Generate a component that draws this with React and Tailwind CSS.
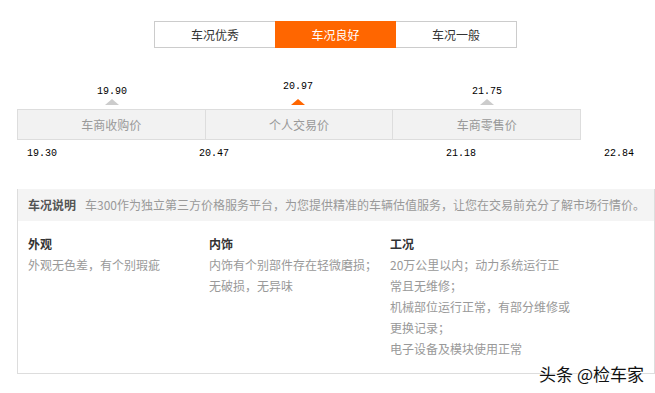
import React from 'react';

const tabs = [
  { label: '车况优秀', active: false },
  { label: '车况良好', active: true },
  { label: '车况一般', active: false },
];

const segments = ['车商收购价', '个人交易价', '车商零售价'];

// markers sit above the bar, left = centre in px from bar start
const markers = [
  { value: '19.90', left: 95, top: 38, active: false },
  { value: '20.97', left: 281, top: 33, active: true },
  { value: '21.75', left: 470, top: 38, active: false },
];

const ticks = [
  { value: '19.30', left: 10 },
  { value: '20.47', left: 182 },
  { value: '21.18', left: 429 },
  { value: '22.84', left: 587 },
];

const columns = [
  { title: '外观', lines: ['外观无色差，有个别瑕疵'] },
  { title: '内饰', lines: ['内饰有个别部件存在轻微磨损；', '无破损，无异味'] },
  {
    title: '工况',
    lines: ['20万公里以内；动力系统运行正', '常且无维修；', '机械部位运行正常，有部分维修或', '更换记录；', '电子设备及模块使用正常'],
  },
];

const cjk = "font-['Microsoft_YaHei','Noto_Sans_CJK_SC',sans-serif]";

export default function App() {
  return (
    <div className={`relative w-[655px] h-[393px] overflow-hidden bg-white ${cjk}`}>
      <div className="ml-[17px] w-[638px] pt-[21px]">
        {/* Tabs */}
        <div className="flex justify-center pr-[1px]">
          {tabs.map((t, i) => (
            <div
              key={t.label}
              className={
                'w-[121px] h-[27px] flex items-center justify-center text-[12px] ' +
                (t.active
                  ? 'bg-[#ff6600] text-white'
                  : 'bg-white text-[#333] border-y border-[#cccccc] ' + (i === 0 ? 'border-l' : 'border-r'))
              }
            >
              {t.label}
            </div>
          ))}
        </div>

        {/* Price chart */}
        <div className="relative h-[141px]">
          {markers.map((m) => (
            <div
              key={m.value}
              className="absolute flex flex-col items-center w-[40px] -ml-[20px]"
              style={{ left: m.left, top: m.top }}
            >
              <span className="font-['Liberation_Mono',monospace] text-[10px] leading-[12px] text-black">{m.value}</span>
            </div>
          ))}
          {markers.map((m) => (
            <div
              key={m.value + 't'}
              className={
                'absolute top-[51px] -ml-[7px] w-0 h-0 border-l-[7px] border-r-[7px] border-b-[6px] border-l-transparent border-r-transparent ' +
                (m.active ? 'border-b-[#ff6600]' : 'border-b-[#cccccc]')
              }
              style={{ left: m.left }}
            />
          ))}
          <div className="absolute top-[61px] left-0 w-[564px] h-[31px] flex border border-[#dddddd] bg-[#f2f2f2]">
            {segments.map((s, i) => (
              <div
                key={s}
                className={'flex-1 flex items-center justify-center text-[12px] text-[#999] ' + (i > 0 ? 'border-l border-[#dddddd]' : '')}
              >
                {s}
              </div>
            ))}
          </div>
          {ticks.map((t) => (
            <span
              key={t.value}
              className="absolute top-[100px] font-['Liberation_Mono',monospace] text-[10px] leading-[12px] text-black"
              style={{ left: t.left }}
            >
              {t.value}
            </span>
          ))}
        </div>

        {/* Description box */}
        <div className="h-[185px] border-x border-b border-[#dddddd]">
          <div className="h-[32px] bg-[#f4f4f4] flex items-center pl-[10px] text-[12px] whitespace-nowrap">
            <span className="font-bold text-[#555]">车况说明</span>
            <span className="ml-[9px] text-[#999]">车300作为独立第三方价格服务平台，为您提供精准的车辆估值服务，让您在交易前充分了解市场行情价。</span>
          </div>
          <div className="flex pl-[10px] pt-[12px]">
            {columns.map((c) => (
              <div key={c.title} className="w-[181px] text-[12px] leading-[21px]">
                <div className="font-bold text-[#333]">{c.title}</div>
                {c.lines.map((l) => (
                  <div key={l} className="text-[#999] whitespace-nowrap">{l}</div>
                ))}
              </div>
            ))}
          </div>
        </div>
      </div>

      {/* watermark */}
      <div className="absolute right-[11px] bottom-[9px] text-[17px] leading-[20px] text-[#111] [text-shadow:0_0_2px_#fff,0_0_2px_#fff,0_0_2px_#fff]">
        头条 @检车家
      </div>
    </div>
  );
}
